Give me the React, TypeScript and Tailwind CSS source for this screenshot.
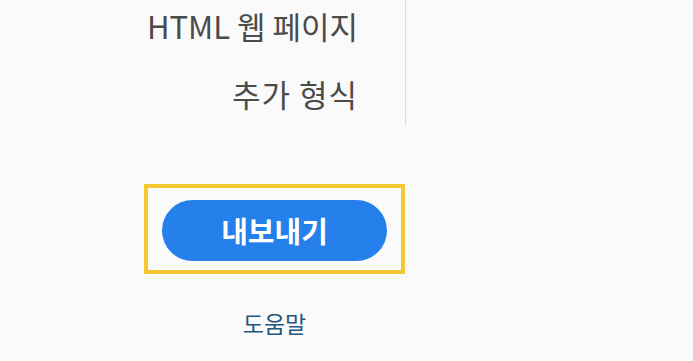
export default function App() {
  const font = { fontFamily: '"Noto Sans CJK KR", "Noto Sans", sans-serif' };
  return (
    <div className="w-[693px] h-[361px] bg-[#fafafa] overflow-hidden" style={font}>
      <div className="w-[406px] border-r border-[#dcdcdc] h-[126px] flex flex-col items-end pr-[47px]">
        <div className="h-[38px] flex items-end text-[31px] leading-none text-[#4b4b4b]">
          <span className="-mb-[3px]">HTML 웹 페이지</span>
        </div>
        <div className="mt-[40px] text-[31px] leading-none text-[#4b4b4b] tracking-[1px]">추가 형식</div>
      </div>
      <div className="ml-[144px] w-[261px] mt-[58px] flex flex-col items-center">
        <div className="w-[261px] h-[90px] border-[4px] border-[#f4c832] flex items-center justify-center">
          <button className="w-[225px] h-[61px] mt-[3px] rounded-full bg-[#2680eb] text-white text-[29px] font-bold leading-none flex items-center justify-center">
            내보내기
          </button>
        </div>
        <div className="mt-[38px] text-[23px] leading-none text-[#25577a]">도움말</div>
      </div>
    </div>
  );
}
